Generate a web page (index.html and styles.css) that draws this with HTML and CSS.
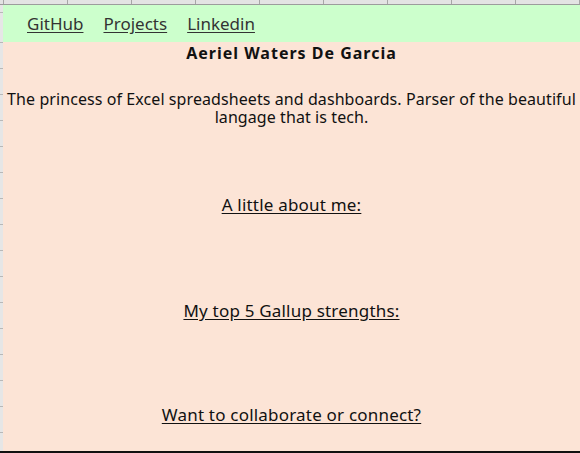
FILE: index.html
```html
<!DOCTYPE html>
<html>
<head>
<meta charset="utf-8">
<link rel="stylesheet" href="styles.css">
</head>
<body>
<div class="sheet">
  <div class="ruler"></div>
  <div class="body">
    <div class="gutter"></div>
    <div class="content">
      <nav class="nav">
        <a class="nav-link" href="#">GitHub</a>
        <a class="nav-link" href="#">Projects</a>
        <a class="nav-link" href="#">Linkedin</a>
      </nav>
      <main class="card">
        <h1 class="title">Aeriel Waters De Garcia</h1>
        <p class="intro">The princess of Excel spreadsheets and dashboards. Parser of the beautiful langage that is tech.</p>
        <h2 class="section about">A little about me:</h2>
        <h2 class="section gallup">My top 5 Gallup strengths:</h2>
        <h2 class="section connect">Want to collaborate or connect?</h2>
      </main>
    </div>
  </div>
  <div class="bottom-line"></div>
</div>
</body>
</html>
```
FILE: styles.css
```css
html, body {
  margin: 0;
  padding: 0;
}
body {
  width: 580px;
  height: 453px;
  overflow: hidden;
  font-family: "Noto Sans", "Open Sans", sans-serif;
  color: #111;
  background: #fce4d6;
}
.sheet {
  display: flex;
  flex-direction: column;
  height: 453px;
}
.ruler {
  height: 4px;
  border-bottom: 1px solid #9c9c9c;
  background-color: #e3e3e3;
  background-image: repeating-linear-gradient(to right, transparent 0, transparent 3px, #a6a6a6 3px, #a6a6a6 4px, transparent 4px, transparent 64px);
  background-position: 0 0;
  background-size: 64px 100%;
  flex: none;
}
.body {
  display: flex;
  flex: 1;
  min-height: 0;
}
.gutter {
  width: 3px;
  flex: none;
  background-color: #e6e6e6;
  background-image: repeating-linear-gradient(to bottom, transparent 0, transparent 25px, #b8b8b8 25px, #b8b8b8 26px);
  background-position: 0 12px;
}
.content {
  flex: 1;
  display: flex;
  flex-direction: column;
}
.nav {
  height: 37px;
  background: #ccffcc;
  display: flex;
  align-items: center;
  gap: 20px;
  padding-left: 24px;
  flex: none;
}
.nav-link {
  color: #333;
  font-size: 17px;
  text-decoration: underline;
  text-underline-offset: 2px;
}
.card {
  flex: 1;
  background: #fce4d6;
  text-align: center;
  display: flex;
  flex-direction: column;
  align-items: center;
}
.title {
  margin: 1px 0 0;
  font-size: 16px;
  font-weight: 700;
  letter-spacing: 1px;
  line-height: 20px;
}
.intro {
  margin: 27px 0 0;
  font-size: 16px;
  letter-spacing: 0.08px;
  line-height: 18px;
  padding: 0 1px;
}
.section {
  margin: 0;
  font-size: 17px;
  font-weight: 400;
  letter-spacing: 0.2px;
  line-height: 20px;
  text-decoration: underline;
  text-underline-offset: 2px;
}
.about { margin-top: 69px; }
.gallup { margin-top: 86px; }
.connect { margin-top: 84px; }
.bottom-line {
  height: 2px;
  background: #111;
  flex: none;
}
```
